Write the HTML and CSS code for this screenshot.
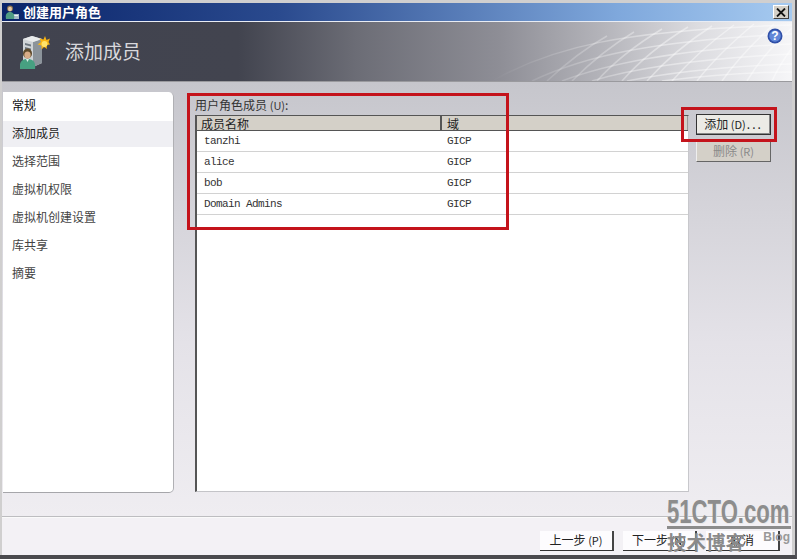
FILE: index.html
```html
<!DOCTYPE html>
<html lang="zh-CN">
<head>
<meta charset="utf-8">
<title>创建用户角色</title>
<link rel="stylesheet" href="styles.css">
</head>
<body>
<div class="window">
  <div class="titlebar">
    <svg class="title-icon" width="16" height="16" viewBox="0 0 16 16"><rect x="8" y="10" width="7" height="5" fill="#a9bcc8"/><rect x="9" y="11" width="5" height="1" fill="#eef3f6"/><circle cx="6" cy="4.500" r="3" fill="#8a7350"/><ellipse cx="6" cy="5" rx="2" ry="2.300" fill="#e6c9a8"/><path d="M2 15c-1-5 1-7 4-7s5 2 4 7z" fill="#4f9c84"/></svg>
    <span class="title-text">创建用户角色</span>
    <span class="close">
      <svg width="10" height="9" viewBox="0 0 10 9"><path d="M1 0.500l8 8M9 0.500l-8 8" stroke="#111" stroke-width="1.800" fill="none"/></svg>
    </span>
  </div>
  <header class="banner">
    <svg class="banner-grid" width="300" height="59" viewBox="0 0 300 59">
      <defs>
        <linearGradient id="fade" gradientUnits="userSpaceOnUse" x1="0" y1="0" x2="170" y2="0">
          <stop offset="0" stop-color="#fff" stop-opacity="0"/>
          <stop offset="1" stop-color="#fff" stop-opacity=".42"/>
        </linearGradient>
      </defs>
      <g stroke="url(#fade)" stroke-width="1.500" fill="none">
        <path d="M0 59C60 25 130 8 300 3"/><path d="M40 59C90 35 160 18 300 12"/><path d="M70 59C120 40 190 27 300 22"/><path d="M100 59C150 44 220 36 300 32"/><path d="M135 59C180 50 240 44 300 42"/><path d="M170 59C210 54 260 50 300 50"/>
        <path d="M55 59C70 45 90 28 115 14"/><path d="M80 59C95 44 115 26 142 10"/><path d="M105 59C120 42 142 24 170 7"/><path d="M130 59C145 42 168 22 196 5"/><path d="M155 59C170 42 192 22 220 4"/><path d="M180 59C195 42 216 22 242 3"/><path d="M205 59C218 42 238 22 262 2"/><path d="M230 59C242 42 260 22 282 2"/><path d="M255 59C265 42 280 24 300 6"/><path d="M280 59C286 46 294 34 300 26"/>
      </g>
    </svg>
    <svg class="banner-icon" width="30" height="36" viewBox="0 0 30 36">
      <path d="M3 5l9-3 10 3v24l-9 4-10-3z" fill="#cfd3d6"/>
      <path d="M13 8l9-3v24l-9 4z" fill="#8c949b"/>
      <path d="M3 5l9-3 10 3-9 3z" fill="#e9ebec"/>
      <path d="M5 9l6 1.500v2l-6-1.500zM5 13l6 1.500v2l-6-1.500z" fill="#6e7780"/>
      <path d="M25 2l1.500 4 3.500-1.500-1.500 3.500 1.500 2.500-3.500 .500 .500 4-3-2-2.500 2.500 0-4-4-1 3.500-2.500-1.500-3.500 4 1z" fill="#f8b412"/>
      <circle cx="24.500" cy="10" r="3" fill="#ffe36a"/>
      <ellipse cx="7.500" cy="19.500" rx="4.500" ry="5" fill="#5d4a2c"/>
      <ellipse cx="7.500" cy="21" rx="3.200" ry="3.600" fill="#d8ac88"/>
      <path d="M0 35c-1-7 2-10 7.500-10s8.500 3 7.500 10z" fill="#47a081"/>
      <path d="M6 25l1.500 3 1.500-3z" fill="#dff0ea"/>
    </svg>
    <h1 class="banner-title">添加成员</h1>
    <svg class="help" width="16" height="16" viewBox="0 0 16 16">
      <circle cx="8" cy="8" r="7.500" fill="#2f4fa8"/><circle cx="8" cy="8" r="5.800" fill="#6288d8"/>
      <text x="8" y="12" text-anchor="middle" class="help-mark">?</text>
    </svg>
  </header>
  <div class="content">
    <nav class="steps">
      <div class="step step-done">常规</div>
      <div class="step step-current">添加成员</div>
      <div class="step">选择范围</div>
      <div class="step">虚拟机权限</div>
      <div class="step">虚拟机创建设置</div>
      <div class="step">库共享</div>
      <div class="step">摘要</div>
    </nav>
    <main class="pane">
      <div class="list-col">
        <label class="list-label">用户角色成员 <span class="key">(U)</span>:</label>
        <div class="list">
          <div class="list-head">
            <div class="head-cell head-name">成员名称</div>
            <div class="head-cell head-domain">域</div>
          </div>
          <div class="row"><span class="cell-name">tanzhi</span><span class="cell-domain">GICP</span></div>
          <div class="row"><span class="cell-name">alice</span><span class="cell-domain">GICP</span></div>
          <div class="row"><span class="cell-name">bob</span><span class="cell-domain">GICP</span></div>
          <div class="row"><span class="cell-name">Domain Admins</span><span class="cell-domain">GICP</span></div>
        </div>
      </div>
      <div class="side-buttons">
        <button class="btn btn-default">添加 <span class="key">(D)</span><span class="dots">...</span></button>
        <button class="btn btn-disabled" disabled>删除 <span class="key">(R)</span></button>
      </div>
    </main>
  </div>
  <footer class="footer">
    <button class="btn btn-flat">上一步 <span class="key">(P)</span></button>
    <button class="btn btn-flat">下一步 <span class="key">(N)</span></button>
    <button class="btn btn-flat">取消</button>
  </footer>
  <div class="mark mark-list"></div>
  <div class="mark mark-add"></div>
  <div class="wm">
    <div class="wm-top"><span class="wm-logo">51CTO.com</span></div>
    <div class="wm-bottom"><span class="wm-cn">技术博客</span><span class="wm-blog">Blog</span></div>
  </div>
</div>
</body>
</html>
```

FILE: styles.css
```css
* { box-sizing: border-box; }
html, body { margin: 0; padding: 0; }
body {
  width: 799px;
  height: 560px;
  overflow: hidden;
  background: #fff;
  font-family: "Noto Sans CJK SC", "Liberation Sans", sans-serif;
  font-size: 12px;
  color: #222;
}
.window {
  position: relative;
  width: 797px;
  height: 559px;
  display: flex;
  flex-direction: column;
  padding: 3px 3px 0 2px;
  background: #d0cfcf;
  border-right: 2px solid #55555a;
  border-bottom: 4px solid #4a4a4e;
}
.titlebar {
  height: 19px;
  flex: none;
  display: flex;
  align-items: center;
  gap: 3px;
  padding: 0 3px 0 2px;
  background: linear-gradient(90deg, #0a246a 0%, #2a4a8e 35%, #7fa8dc 78%, #a6caf0 100%);
  border-bottom: 1px solid #e8ecf4;
}
.title-text { color: #fff; font-weight: 700; font-size: 13px; line-height: 16px; }
.close {
  margin-left: auto;
  width: 16px;
  height: 14px;
  display: flex;
  align-items: center;
  justify-content: center;
  background: #d4d0c8;
  border: 1px solid;
  border-color: #fff #404040 #404040 #fff;
}
.banner {
  position: relative;
  height: 60px;
  flex: none;
  display: flex;
  align-items: center;
  padding: 0 0 0 18px;
  gap: 15px;
  background: linear-gradient(90deg, #41434f 0%, #42444f 30%, #6c6d76 45%, #8e8e96 63%, #b4b4ba 76%, #dcdce0 88%, #f6f6f8 100%);
  border-bottom: 1px solid #9a9a9e;
}
.banner-grid { position: absolute; right: 0; top: 0; }
.banner-icon { position: relative; }
.banner-title {
  margin: 0 0 3px;
  font-size: 19px;
  font-weight: 400;
  color: #d8d8dc;
  position: relative;
}
.help { position: absolute; right: 9px; top: 6px; }
.help-mark { fill: #fff; font: 700 12px "Liberation Sans", sans-serif; }
.content {
  flex: 1;
  display: flex;
  min-height: 0;
  padding: 10px 21px 23px 1px;
  gap: 21px;
  background: linear-gradient(180deg, #c6c6cc 0%, #e4e2e8 60%, #efedf1 100%);
  border-bottom: 1px solid #bdbdc0;
}
.steps {
  width: 171px;
  flex: none;
  padding-top: 1px;
  background: #fff;
  border-right: 1px solid #b0b0b4;
  border-bottom: 1px solid #a6a6aa;
  border-radius: 0 5px 5px 0;
}
.step {
  height: 28px;
  padding-left: 9px;
  line-height: 24px;
  color: #444;
}
.step-done { color: #111; }
.step-current { height: 26px; margin-bottom: 2px; background: #efeff3; color: #222; }
.pane { flex: 1; display: flex; min-width: 0; gap: 7px; }
.list-col { flex: 1; display: flex; flex-direction: column; min-width: 0; padding: 6px 0 1px; }
.list-label { height: 14px; line-height: 14px; color: #333; }
.key { font-size: 11px; }
.dots { letter-spacing: 2px; margin-left: 1px; }
.list {
  flex: 1;
  margin-top: 3px;
  background: #fff;
  border-left: 2px solid #555;
  border-top: 1px solid #555;
  border-right: 1px solid #c8c8cc;
  border-bottom: 1px solid #c4c4c8;
}
.list-head { display: flex; height: 15px; background: #d4d0c8; border-bottom: 1px solid #555; }
.head-cell { line-height: 15px; color: #222; }
.head-name { width: 245px; padding-left: 4px; border-right: 2px solid #555; }
.head-domain { flex: 1; padding-left: 5px; border-right: 1px solid #999; }
.row {
  display: flex;
  height: 21px;
  align-items: center;
  border-bottom: 1px solid #d2d2d2;
  font: 11px/20px "Liberation Mono", monospace;
  letter-spacing: -.6px;
  color: #333;
}
.cell-name { width: 250px; padding-left: 7px; }
.side-buttons { width: 75px; flex: none; display: flex; flex-direction: column; gap: 6px; padding-top: 22px; }
.btn {
  font: inherit;
  height: 21px;
  padding: 0 0 2px;
  color: #222;
  background: #e4e2de;
  cursor: default;
}
.btn-default { background: #ecebe6; border: 1px solid #333; box-shadow: inset -1px -1px 0 #888; }
.btn-disabled { background: #d4d0c8; color: #8a8a8a; border: 1px solid; border-color: #eee #666 #666 #eee; }
.footer {
  height: 38px;
  flex: none;
  display: flex;
  justify-content: flex-end;
  align-items: flex-end;
  gap: 9px;
  padding: 0 12px 4px 0;
  background: #f3f1f5;
  border-top: 1px solid #fafafa;
}
.btn-flat {
  width: 74px;
  height: 20px;
  background: #fdfcfe;
  border: 0;
  border-bottom: 1px solid #333;
  border-right: 2px solid #444;
}
.mark { position: absolute; border: 3px solid #c4131b; pointer-events: none; }
.mark-list { left: 187px; top: 93px; width: 322px; height: 137px; }
.mark-add { left: 681px; top: 107px; width: 96px; height: 35px; }
.wm {
  position: absolute;
  left: 667px;
  top: 497px;
  width: 124px;
  color: #8d8d8d;
  pointer-events: none;
}
.wm-top {
  height: 32px;
  overflow: visible;
  border-bottom: 3px solid #8c8c8c;
}
.wm-logo {
  display: block;
  width: 184px;
  font: 700 33px/29px "Liberation Sans", sans-serif;
  white-space: nowrap;
  transform: scaleX(.67);
  transform-origin: left top;
  text-shadow: 1px 1px 0 #e8e8e8;
}
.wm-bottom { display: flex; justify-content: space-between; align-items: flex-start; margin-top: 1px; }
.wm-cn { font-size: 19.500px; line-height: 23px; font-weight: 700; color: #8a8a8a; white-space: nowrap; }
.wm-blog { font: 700 12px/13px "Liberation Sans", sans-serif; color: #999; margin: 1px 1px 0 0; }
```
